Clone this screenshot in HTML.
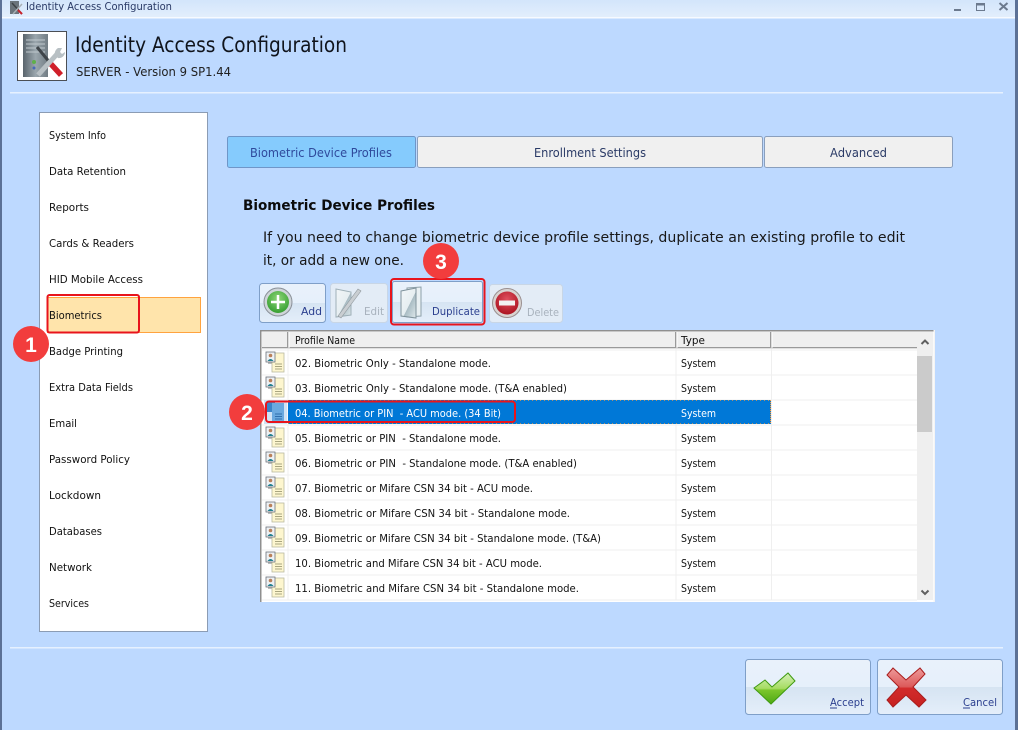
<!DOCTYPE html>
<html lang="en"><head><meta charset="utf-8"><title>Identity Access Configuration</title>
<style>
html,body{margin:0;padding:0;background:#bdd9ff;width:1018px;height:730px;overflow:hidden}
svg{display:block;font-family:"DejaVu Sans",sans-serif}
.n{font-size:10.800px;fill:#111}
.r{font-size:10.800px;fill:#111}
.s{fill:#fff}
.b{font-size:10.800px;fill:#2b3f8f}
.d{font-size:10.800px;fill:#a8b2bd}
.w{font-weight:bold;font-size:21px;fill:#fff;text-anchor:middle;font-family:"Liberation Sans",sans-serif}
</style></head><body>
<svg width="1018" height="730" viewBox="0 0 1018 730" xmlns="http://www.w3.org/2000/svg">
<defs>
<linearGradient id="tb" x1="0" y1="0" x2="0" y2="1"><stop offset="0" stop-color="#d3e5fb"/><stop offset="1" stop-color="#e2eefc"/></linearGradient>
<linearGradient id="btn" x1="0" y1="0" x2="0" y2="1"><stop offset="0" stop-color="#e9f1fb"/><stop offset=".5" stop-color="#e6f0fb"/><stop offset=".5" stop-color="#d6e4f2"/><stop offset="1" stop-color="#e4eefa"/></linearGradient>
<linearGradient id="srv" x1="0" y1="0" x2="1" y2="0"><stop offset="0" stop-color="#59646c"/><stop offset=".5" stop-color="#9aa6ad"/><stop offset="1" stop-color="#727d84"/></linearGradient>
<radialGradient id="gr" cx=".5" cy=".35" r=".7"><stop offset="0" stop-color="#8ed678"/><stop offset="1" stop-color="#2f9a2c"/></radialGradient>
<radialGradient id="rd" cx=".5" cy=".35" r=".7"><stop offset="0" stop-color="#e0505f"/><stop offset="1" stop-color="#a80f1c"/></radialGradient>
<linearGradient id="doc" x1="0" y1="0" x2="1" y2="1"><stop offset="0" stop-color="#f2f6f8"/><stop offset=".55" stop-color="#e6eef1"/><stop offset=".56" stop-color="#a9bcc4"/><stop offset="1" stop-color="#dfe9ec"/></linearGradient>
<linearGradient id="chk" x1="0" y1="0" x2="0" y2="1"><stop offset="0" stop-color="#d4f0b8"/><stop offset=".5" stop-color="#a6dc62"/><stop offset=".55" stop-color="#7cc62c"/><stop offset="1" stop-color="#4da814"/></linearGradient>
<linearGradient id="crs" x1="0" y1="0" x2="0" y2="1"><stop offset="0" stop-color="#ee9a9a"/><stop offset=".48" stop-color="#dc5a5a"/><stop offset=".52" stop-color="#d22c2c"/><stop offset="1" stop-color="#c62020"/></linearGradient>
<g id="ri">
<rect x="3" y="2" width="9" height="10" fill="#8e8e8e" opacity=".6"/>
<rect x="7" y="1" width="12" height="19" fill="#fdf6cf" stroke="#b9b9a0" stroke-width=".8"/>
<rect x="1" y="0" width="9" height="10" fill="#eef1f4" stroke="#6c727a" stroke-width=".8"/>
<circle cx="5.500" cy="3.500" r="1.800" fill="#b9805a"/><path d="M2.500 9q3-4 6 0z" fill="#1f7f8f"/>
<path d="M10 12h7M10 14.500h7M10 17h7" stroke="#a9a680" stroke-width="1"/>
</g>
</defs>

<!-- window -->
<rect width="1018" height="730" fill="#bdd9ff"/>
<rect x="0" y="0" width="1018" height="17" fill="url(#tb)"/>
<rect x="2" y="17" width="1014" height="1.500" fill="#f7faff"/>
<rect x="0" y="0" width="2" height="730" fill="#5c7196"/>
<rect x="1015" y="0" width="3" height="730" fill="#5c7196"/>

<!-- title icon -->
<rect x="10" y="1" width="9" height="13" fill="#6a747c"/>
<path d="M12 3l10 11" stroke="#3d4347" stroke-width="1.500"/><path d="M18 10l4 4" stroke="#c8232c" stroke-width="2"/><path d="M22 4l-9 10" stroke="#a9b0b5" stroke-width="1.500"/>
<text x="26" y="10" font-size="10.800" fill="#2a3a66" textLength="146" lengthAdjust="spacingAndGlyphs">Identity Access Configuration</text>

<!-- window controls -->
<rect x="954" y="9" width="7" height="2" fill="#6c7a8e"/>
<rect x="976.500" y="3.500" width="8" height="7" fill="none" stroke="#6c7a8e" stroke-width="1"/><rect x="976" y="3" width="9" height="2.500" fill="#6c7a8e"/>
<path d="M999.500 3l8 7M1007.500 3l-8 7" stroke="#6c7a8e" stroke-width="2"/>

<!-- header -->
<rect x="17.500" y="31.500" width="49" height="49" fill="#fff" stroke="#4b4f55"/>
<rect x="23" y="34" width="25" height="43" fill="url(#srv)"/>
<path d="M26 40h19M26 44h19M26 48h19M26 52h19" stroke="#c0c9ce" stroke-width="1"/>
<circle cx="34" cy="62" r="2" fill="#5fb04a"/><circle cx="34" cy="68" r="1.500" fill="#4668b8"/>
<path d="M37 47l14 17" stroke="#3f454a" stroke-width="3"/>
<path d="M50 63l11 12" stroke="#d01f2a" stroke-width="5.500"/>
<path d="M38 75l20-22" stroke="#b8c0c4" stroke-width="5"/>
<path d="M58 48l4 0-2 4 2 2 3-2a6 6 0 0 1-7 6l-3-3a6 6 0 0 1 3-7z" fill="#b8c0c4"/>
<text x="75" y="52" font-size="21.500" fill="#10141c" textLength="272" lengthAdjust="spacingAndGlyphs">Identity Access Configuration</text>
<text x="76" y="76" font-size="12" fill="#222" textLength="155" lengthAdjust="spacingAndGlyphs">SERVER - Version 9 SP1.44</text>
<rect x="10" y="92" width="993" height="1.500" fill="#e6f1ff"/>

<!-- nav -->
<rect x="39.500" y="112.500" width="168" height="519" fill="#fff" stroke="#8b9cb4"/>
<rect x="47.500" y="297.500" width="153" height="35" fill="#ffe4ab" stroke="#ffa33f"/>
<text class="n" x="49" y="139" textLength="57" lengthAdjust="spacingAndGlyphs">System Info</text>
<text class="n" x="49" y="175" textLength="77" lengthAdjust="spacingAndGlyphs">Data Retention</text>
<text class="n" x="49" y="211" textLength="40" lengthAdjust="spacingAndGlyphs">Reports</text>
<text class="n" x="49" y="247" textLength="85" lengthAdjust="spacingAndGlyphs">Cards &amp; Readers</text>
<text class="n" x="49" y="283" textLength="94" lengthAdjust="spacingAndGlyphs">HID Mobile Access</text>
<text class="n" x="49" y="319" textLength="53" lengthAdjust="spacingAndGlyphs">Biometrics</text>
<text class="n" x="49" y="355" textLength="74" lengthAdjust="spacingAndGlyphs">Badge Printing</text>
<text class="n" x="49" y="391" textLength="84" lengthAdjust="spacingAndGlyphs">Extra Data Fields</text>
<text class="n" x="49" y="427" textLength="28" lengthAdjust="spacingAndGlyphs">Email</text>
<text class="n" x="49" y="463" textLength="81" lengthAdjust="spacingAndGlyphs">Password Policy</text>
<text class="n" x="49" y="499" textLength="52" lengthAdjust="spacingAndGlyphs">Lockdown</text>
<text class="n" x="49" y="535" textLength="53" lengthAdjust="spacingAndGlyphs">Databases</text>
<text class="n" x="49" y="571" textLength="43" lengthAdjust="spacingAndGlyphs">Network</text>
<text class="n" x="49" y="607" textLength="40" lengthAdjust="spacingAndGlyphs">Services</text>

<!-- tabs -->
<rect x="227.500" y="136.500" width="188" height="31" rx="2" fill="#85cbfd" stroke="#6f96c8"/>
<rect x="417.500" y="136.500" width="345" height="31" rx="2" fill="#f0f0f0" stroke="#8a9fbd"/>
<rect x="764.500" y="136.500" width="188" height="31" rx="2" fill="#f0f0f0" stroke="#8a9fbd"/>
<text x="250" y="157" font-size="12" fill="#2f4a9c" textLength="142" lengthAdjust="spacingAndGlyphs">Biometric Device Profiles</text>
<text x="534" y="157" font-size="12" fill="#2a3a66" textLength="112" lengthAdjust="spacingAndGlyphs">Enrollment Settings</text>
<text x="830" y="157" font-size="12" fill="#2a3a66" textLength="57" lengthAdjust="spacingAndGlyphs">Advanced</text>

<!-- heading -->
<text x="243" y="210" font-size="14.500" font-weight="bold" fill="#0c0c0c" textLength="192" lengthAdjust="spacingAndGlyphs">Biometric Device Profiles</text>
<text x="263" y="242" font-size="14.500" fill="#181818" textLength="642" lengthAdjust="spacingAndGlyphs">If you need to change biometric device profile settings, duplicate an existing profile to edit</text>
<text x="263" y="265" font-size="14.500" fill="#181818" textLength="141" lengthAdjust="spacingAndGlyphs">it, or add a new one.</text>

<!-- toolbar -->
<rect x="259.500" y="283.500" width="66" height="39" rx="3" fill="url(#btn)" stroke="#7f9fc8"/>
<circle cx="278" cy="302" r="14" fill="#cfd5da" stroke="#8a9098"/>
<circle cx="278" cy="302" r="11" fill="url(#gr)"/>
<path d="M278 295v14M271 302h14" stroke="#fff" stroke-width="2.500"/>
<text class="b" x="301" y="315" textLength="21" lengthAdjust="spacingAndGlyphs">Add</text>

<rect x="330.500" y="283.500" width="57" height="39" rx="3" fill="#e3ecf6" stroke="#c8d6e6"/>
<path d="M336 289l15 3v23l-15 2z" fill="url(#doc)" stroke="#9fb0b8"/>
<path d="M338 316l20-27 3 2-20 27z" fill="#c9ced2" stroke="#8f979c" stroke-width=".6"/>
<text class="d" x="364" y="315" textLength="20" lengthAdjust="spacingAndGlyphs">Edit</text>

<rect x="392.500" y="281.500" width="90" height="41" rx="2" fill="url(#btn)" stroke="#7f9fc8"/>
<path d="M407 288l14-1v29l-14 1z" fill="#e9f0f3" stroke="#8da0a9"/>
<path d="M401 291l15-3v30l-15-2z" fill="url(#doc)" stroke="#7f929b"/>
<text class="b" x="432" y="315" textLength="48" lengthAdjust="spacingAndGlyphs">Duplicate</text>

<rect x="489.500" y="284.500" width="73" height="38" rx="3" fill="#e3ecf6" stroke="#c8d6e6"/>
<circle cx="507" cy="303" r="14.500" fill="#d9d4d2" stroke="#9a8f8f"/>
<circle cx="507" cy="303" r="11.500" fill="url(#rd)"/>
<rect x="499" y="300.500" width="16" height="5" fill="#f2f2f2"/>
<text class="d" x="527" y="316" textLength="32" lengthAdjust="spacingAndGlyphs">Delete</text>

<!-- grid -->
<rect x="260" y="330" width="675" height="272" fill="#fff"/>
<rect x="260" y="330" width="675" height="1.500" fill="#8f8f8f"/>
<rect x="260" y="330" width="1.500" height="272" fill="#8f8f8f"/>
<rect x="933.500" y="330" width="1.500" height="272" fill="#f4f4f4"/>
<rect x="262" y="332" width="655" height="15" fill="#efefef"/>
<rect x="262" y="347" width="655" height="1.300" fill="#9a9a9a"/>
<rect x="287" y="332" width="1.300" height="16" fill="#9a9a9a"/>
<rect x="288.500" y="332" width="1" height="16" fill="#fff"/>
<rect x="675" y="332" width="1.300" height="16" fill="#9a9a9a"/>
<rect x="676.500" y="332" width="1" height="16" fill="#fff"/>
<rect x="770" y="332" width="1.300" height="16" fill="#9a9a9a"/>
<rect x="771.500" y="332" width="1" height="16" fill="#fff"/>
<text class="r" x="295" y="344" textLength="60" lengthAdjust="spacingAndGlyphs">Profile Name</text>
<text class="r" x="681" y="344" textLength="24" lengthAdjust="spacingAndGlyphs">Type</text>

<!-- row lines -->
<g fill="#efefef">
<rect x="262" y="349.500" width="655" height="1"/><rect x="262" y="374.500" width="655" height="1"/><rect x="262" y="399.500" width="655" height="1"/><rect x="262" y="424.500" width="655" height="1"/><rect x="262" y="449.500" width="655" height="1"/><rect x="262" y="474.500" width="655" height="1"/><rect x="262" y="499.500" width="655" height="1"/><rect x="262" y="524.500" width="655" height="1"/><rect x="262" y="549.500" width="655" height="1"/><rect x="262" y="574.500" width="655" height="1"/><rect x="262" y="599.500" width="655" height="1"/>
<rect x="287.500" y="349" width="1" height="251"/><rect x="675.500" y="349" width="1" height="251"/><rect x="771" y="349" width="1" height="251"/>
</g>

<!-- selected -->
<rect x="264" y="400" width="23" height="24" fill="#cfe3f6"/>
<rect x="288" y="400" width="483" height="24" fill="#0078d7"/>
<path d="M770.500 400v24" stroke="#ff9a30" stroke-dasharray="1 1"/>
<path d="M288 400.500h483M288 423.500h483" stroke="#ff9a30" stroke-dasharray="1 3" opacity=".7"/>

<!-- row icons -->
<use href="#ri" x="265" y="352"/><use href="#ri" x="265" y="377"/>
<rect x="266" y="402" width="9" height="10" fill="#3a83c8"/><rect x="272" y="403" width="12" height="19" fill="#6aa9df"/><path d="M275 414h7M275 416.500h7M275 419h7" stroke="#2f6fae"/>
<use href="#ri" x="265" y="427"/><use href="#ri" x="265" y="452"/><use href="#ri" x="265" y="477"/><use href="#ri" x="265" y="502"/><use href="#ri" x="265" y="527"/><use href="#ri" x="265" y="552"/><use href="#ri" x="265" y="577"/>

<!-- row text -->
<text class="r" x="295" y="367" textLength="196" lengthAdjust="spacingAndGlyphs">02. Biometric Only - Standalone mode.</text>
<text class="r" x="681" y="367" textLength="35" lengthAdjust="spacingAndGlyphs">System</text>
<text class="r" x="295" y="392" textLength="272" lengthAdjust="spacingAndGlyphs">03. Biometric Only - Standalone mode. (T&amp;A enabled)</text>
<text class="r" x="681" y="392" textLength="35" lengthAdjust="spacingAndGlyphs">System</text>
<text class="r s" x="295" y="417" textLength="206" lengthAdjust="spacingAndGlyphs" xml:space="preserve">04. Biometric or PIN  - ACU mode. (34 Bit)</text>
<text class="r s" x="681" y="417" textLength="35" lengthAdjust="spacingAndGlyphs">System</text>
<text class="r" x="295" y="442" textLength="206" lengthAdjust="spacingAndGlyphs" xml:space="preserve">05. Biometric or PIN  - Standalone mode.</text>
<text class="r" x="681" y="442" textLength="35" lengthAdjust="spacingAndGlyphs">System</text>
<text class="r" x="295" y="467" textLength="282" lengthAdjust="spacingAndGlyphs" xml:space="preserve">06. Biometric or PIN  - Standalone mode. (T&amp;A enabled)</text>
<text class="r" x="681" y="467" textLength="35" lengthAdjust="spacingAndGlyphs">System</text>
<text class="r" x="295" y="492" textLength="238" lengthAdjust="spacingAndGlyphs">07. Biometric or Mifare CSN 34 bit - ACU mode.</text>
<text class="r" x="681" y="492" textLength="35" lengthAdjust="spacingAndGlyphs">System</text>
<text class="r" x="295" y="517" textLength="275" lengthAdjust="spacingAndGlyphs">08. Biometric or Mifare CSN 34 bit - Standalone mode.</text>
<text class="r" x="681" y="517" textLength="35" lengthAdjust="spacingAndGlyphs">System</text>
<text class="r" x="295" y="542" textLength="306" lengthAdjust="spacingAndGlyphs">09. Biometric or Mifare CSN 34 bit - Standalone mode. (T&amp;A)</text>
<text class="r" x="681" y="542" textLength="35" lengthAdjust="spacingAndGlyphs">System</text>
<text class="r" x="295" y="567" textLength="247" lengthAdjust="spacingAndGlyphs">10. Biometric and Mifare CSN 34 bit - ACU mode.</text>
<text class="r" x="681" y="567" textLength="35" lengthAdjust="spacingAndGlyphs">System</text>
<text class="r" x="295" y="592" textLength="284" lengthAdjust="spacingAndGlyphs">11. Biometric and Mifare CSN 34 bit - Standalone mode.</text>
<text class="r" x="681" y="592" textLength="35" lengthAdjust="spacingAndGlyphs">System</text>

<!-- scrollbar -->
<rect x="917" y="332" width="16" height="268" fill="#efefef"/>
<rect x="917" y="356" width="15" height="76" fill="#cbcbcb"/>
<path d="M921.500 344l3.500-3.500 3.500 3.500" fill="none" stroke="#606060" stroke-width="2"/>
<path d="M921.500 590.500l3.500 3.500 3.500-3.500" fill="none" stroke="#606060" stroke-width="2"/>

<!-- bottom -->
<rect x="10" y="647" width="993" height="1.500" fill="#e6f1ff"/>
<rect x="745.500" y="659.500" width="125" height="55" rx="3" fill="url(#btn)" stroke="#7f9fc8"/>
<path d="M754 688l11-8 7 7 16-14 7 8-24 23z" fill="url(#chk)" stroke="#3f9a10" stroke-width="1"/>
<text x="830" y="706" font-size="10.800" fill="#2b3f8f" textLength="34" lengthAdjust="spacingAndGlyphs">Accept</text>
<rect x="830" y="707.500" width="7" height="1" fill="#2b3f8f"/>
<rect x="877.500" y="659.500" width="125" height="55" rx="3" fill="url(#btn)" stroke="#7f9fc8"/>
<path d="M887 675l6-7 13 12 14-12 5 6-12 13 13 13-7 7-13-12-13 12-6-7 12-13z" fill="url(#crs)" stroke="#a81c1c" stroke-width="1"/>
<text x="963" y="706" font-size="10.800" fill="#2b3f8f" textLength="34" lengthAdjust="spacingAndGlyphs">Cancel</text>
<rect x="963" y="707.500" width="7" height="1" fill="#2b3f8f"/>

<!-- annotations -->
<rect x="47.500" y="295" width="91.500" height="37.500" rx="2" fill="none" stroke="#e8141c" stroke-width="2"/>
<rect x="266" y="401.500" width="249" height="20.500" rx="3" fill="none" stroke="#e8141c" stroke-width="2"/>
<rect x="391" y="279" width="93.500" height="45.500" rx="3" fill="none" stroke="#e8141c" stroke-width="2"/>
<circle cx="31" cy="344" r="18" fill="#f23d3d"/><text class="w" x="31" y="352">1</text>
<circle cx="247" cy="412" r="18" fill="#f23d3d"/><text class="w" x="247" y="420">2</text>
<circle cx="441" cy="261" r="18" fill="#f23d3d"/><text class="w" x="441" y="269">3</text>
</svg>
</body></html>
